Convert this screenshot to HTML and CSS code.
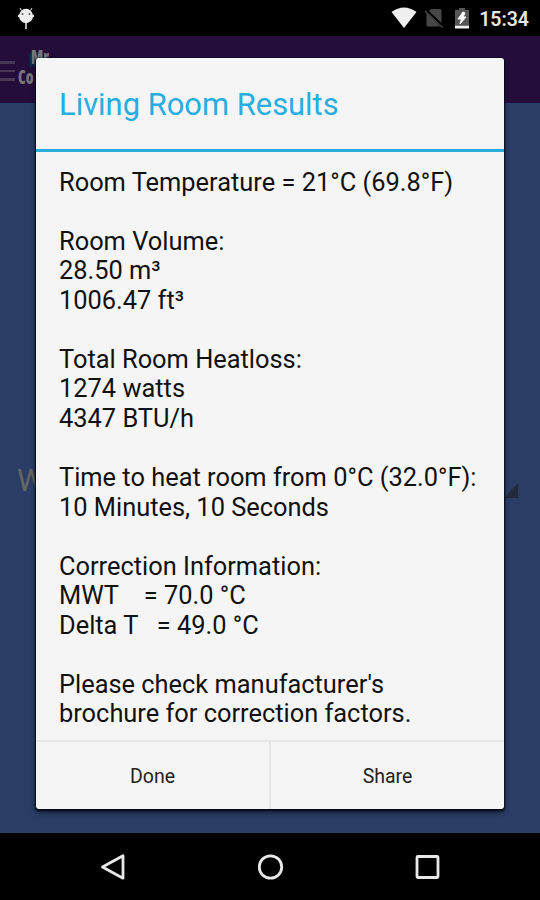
FILE: index.html
```
<!DOCTYPE html>
<html lang="en">
<head>
    <meta charset="UTF-8">
    <meta name="viewport" content="width=device-width, initial-scale=1.0">
    <title>Living Room Results</title>
    <link rel="stylesheet" href="styles.css">
</head>
<body>
    <div class="screen">
        <!-- Status bar -->
        <header class="status-bar">
            <svg class="debug-icon" width="18" height="24" viewBox="0 0 18 24">
                <path d="M4.500 3.500L3 1M13.500 3.500L15 1" stroke="#ccc" stroke-width="1.100"/>
                <path d="M9 15V22" stroke="#eee" stroke-width="1.500"/>
                <ellipse cx="9" cy="9" rx="7" ry="7.200" fill="#eee"/>
                <path d="M1 7.800H3V10H1ZM15 7.800H17V10H15Z" fill="#eee"/>
                <circle cx="5.500" cy="7" r="1" fill="#555"/>
                <circle cx="12.500" cy="7" r="1" fill="#555"/>
            </svg>
            <div class="status-right">
                <svg class="wifi-icon" width="26" height="22" viewBox="0 0 26 22">
                    <path d="M0.500 5Q13 -4 25.500 5L13 21Z" fill="#f0f0f0"/>
                </svg>
                <svg class="sim-icon" width="18" height="20" viewBox="0 0 18 20">
                    <path d="M6 1H15Q16.500 1 16.500 2.500V15L4 3ZM1.500 5L15 18.500H3Q1.500 18.500 1.500 17Z" fill="#474747"/>
                    <path d="M0 3L17.500 19.500" stroke="#474747" stroke-width="1.300"/>
                </svg>
                <svg class="battery-icon" width="14" height="21" viewBox="0 0 14 21">
                    <path d="M4 0H10V2H14V17H0V2H4Z" fill="#555"/>
                    <path d="M0 17.500H14V20.500H0Z" fill="#f0f0f0"/>
                    <path d="M8 4L3 11H6.500L5 16L11 9H8L10 5Z" fill="#fff" stroke="#fff"/>
                </svg>
                <span class="clock">15:34</span>
            </div>
        </header>

        <!-- App behind the dialog -->
        <div class="toolbar">
            <div class="menu-icon"><i></i><i></i><i></i></div>
            <div class="logo">
                <span class="logo-top">Mr</span>
                <span class="logo-bottom">Co</span>
            </div>
        </div>
        <main class="content">
            <span class="spinner-text">W</span>
            <span class="spinner-arrow"></span>
        </main>

        <!-- Navigation bar -->
        <footer class="nav-bar">
            <svg width="30" height="30" viewBox="0 0 30 30">
                <path d="M4.500 15L25 3.800V26.200Z"/>
            </svg>
            <svg width="30" height="30" viewBox="0 0 30 30">
                <circle cx="15.500" cy="15" r="11.200"/>
            </svg>
            <svg width="30" height="30" viewBox="0 0 30 30">
                <rect x="5" y="4.500" width="21" height="21" rx="1"/>
            </svg>
        </footer>

        <!-- Results dialog -->
        <div class="dialog">
            <h1 class="dialog-title">Living Room Results</h1>
            <div class="dialog-message">Room Temperature = 21°C (69.8°F)

Room Volume:
28.50 m³
1006.47 ft³

Total Room Heatloss:
1274 watts
4347 BTU/h

Time to heat room from 0°C (32.0°F):
10 Minutes, 10 Seconds

Correction Information:
MWT    = 70.0 °C
Delta T   = 49.0 °C

Please check manufacturer's
brochure for correction factors.</div>
            <div class="dialog-buttons">
                <button>Done</button>
                <button>Share</button>
            </div>
        </div>
    </div>
</body>
</html>
```
FILE: styles.css
```
body {
    margin: 0;
    background-color: #000;
    font-family: Roboto, sans-serif;
}
.screen {
    position: relative;
    display: flex;
    flex-direction: column;
    width: 540px;
    height: 900px;
    overflow: hidden;
}
.status-bar {
    display: flex;
    justify-content: space-between;
    box-sizing: border-box;
    height: 36px;
    padding: 0 11px 0 17px;
    background-color: #000;
}
.debug-icon {
    margin-top: 7px;
    fill: none;
}
.status-right {
    display: flex;
    align-items: flex-start;
}
.wifi-icon {
    margin: 7px 8px 0 0;
}
.sim-icon {
    margin: 8px 12px 0 0;
}
.battery-icon {
    margin: 8px 10px 0 0;
}
.clock {
    color: #e6e6e6;
    font-size: 19.5px;
    font-weight: 600;
    line-height: 39px;
}
.toolbar {
    display: flex;
    height: 67px;
    background-color: #250d3b;
}
.menu-icon {
    display: flex;
    flex-direction: column;
    gap: 6px;
    width: 15px;
    padding-top: 25px;
}
.menu-icon i {
    height: 2.5px;
    background-color: #483757;
}
.logo {
    display: flex;
    flex-direction: column;
    width: 50px;
    padding: 11px 0 0 3px;
    color: #777;
    font-family: "Open Sans", sans-serif;
    font-stretch: condensed;
    font-size: 19px;
    font-weight: 800;
    line-height: 20px;
}
.logo-top {
    align-self: flex-start;
    margin-left: 13px;
    transform: scaleX(0.8);
    transform-origin: left;
    text-shadow: -3px 3px 1px #07324a;
}
.logo-bottom {
    transform: scaleX(0.8);
    transform-origin: left;
}
.content {
    flex: 1;
    display: flex;
    align-items: center;
    justify-content: space-between;
    padding: 28px 22px 0 17px;
    background-color: #293d66;
}
.spinner-text {
    margin-bottom: 3px;
    color: #66665f;
    font-size: 31px;
    font-weight: 400;
}
.spinner-arrow {
    width: 14px;
    height: 15px;
    margin-top: 17px;
    background-color: #22293a;
    clip-path: polygon(100% 0, 100% 100%, 0 100%);
}
.nav-bar {
    display: flex;
    justify-content: center;
    gap: 127px;
    box-sizing: border-box;
    height: 67px;
    padding-top: 19px;
    background-color: #000;
}
.nav-bar svg {
    fill: none;
    stroke: #e8e8e8;
    stroke-width: 2.8;
    stroke-linejoin: round;
}
.dialog {
    position: absolute;
    top: 58px;
    left: 36px;
    display: flex;
    flex-direction: column;
    width: 468px;
    height: 751px;
    background-color: #f5f5f5;
    border-radius: 3px;
    box-shadow: 0 1px 2px 1px #05091a, 0 4px 5px rgba(20, 28, 30, 0.7);
}
.dialog-title {
    margin: 0;
    padding: 0 23px;
    border-bottom: 3px solid #28addf;
    color: #28addf;
    font-size: 30.9px;
    font-weight: 400;
    line-height: 94px;
    height: 91px;
}
.dialog-message {
    flex: 1;
    padding: 15.5px 0 0 23px;
    color: #111;
    font-size: 25.4px;
    line-height: 29.55px;
    white-space: pre;
}
.dialog-buttons {
    display: flex;
    height: 67px;
    border-top: 2px solid #e6e6e6;
}
.dialog-buttons button {
    flex: 1;
    padding: 2px 0 0;
    border: none;
    background: none;
    color: #222;
    font-family: inherit;
    font-size: 19.5px;
}
.dialog-buttons button + button {
    border-left: 2px solid #e6e6e6;
}
```
